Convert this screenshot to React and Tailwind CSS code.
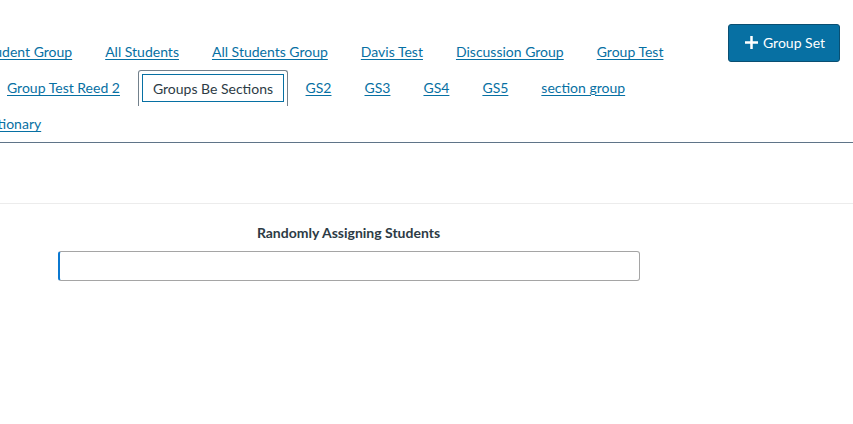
export default function App() {
  const link = "shrink-0 text-[14px] leading-[20px] text-[#0770a3] underline underline-offset-2 whitespace-nowrap";
  return (
    <div className="w-[853px] h-[424px] overflow-hidden bg-white font-['Lato','Noto_Sans',sans-serif] text-[14px]">
      <div className="h-[143px] border-b border-[#5f7488] flex items-start">
        <div className="w-[728px] shrink-0 pt-[34px]">
          <div className="flex flex-col">
            <div className="h-[36px] flex items-center gap-[33px] -ml-[18px]">
              <a className={link}>Student Group</a>
              <a className={link}>All Students</a>
              <a className={link}>All Students Group</a>
              <a className={link}>Davis Test</a>
              <a className={link}>Discussion Group</a>
              <a className={link}>Group Test</a>
            </div>
            <div className="h-[36px] flex items-center ml-[7px]">
              <a className={link}>Group Test Reed 2</a>
              <div className="ml-[18px] mr-[17.6px] h-[36px] w-[150px] shrink-0 rounded-t-[3px] border border-b-0 border-[#73818c] pt-[3px] px-[3px]">
                <div className="h-[28px] border border-[#0770a3] flex items-center justify-center text-[#2d3b45] whitespace-nowrap">Groups Be Sections</div>
              </div>
              <div className="flex gap-[33px]">
                <a className={link}>GS2</a>
                <a className={link}>GS3</a>
                <a className={link}>GS4</a>
                <a className={link}>GS5</a>
                <a className={link}>section group</a>
              </div>
            </div>
            <div className="h-[36px] flex items-center -ml-[23px]">
              <a className={link}>Dictionary</a>
            </div>
          </div>
        </div>
        <div className="pt-[24px]">
          <button className="w-[112px] h-[38px] pl-[2px] pb-[1px] rounded-[3px] border border-[#0a4f72] bg-[#0770a3] text-white flex items-center justify-center gap-[5px]">
            <svg width="13" height="13" viewBox="0 0 13 13" aria-hidden="true">
              <path d="M6.5 0v13M0 6.5h13" stroke="#ffffff" strokeWidth="2.5" fill="none" />
            </svg>
            <span>Group Set</span>
          </button>
        </div>
      </div>
      <div className="h-[61px] border-b border-[#ececec]"></div>
      <div className="w-[581px] ml-[58px] pt-[19px]">
        <div className="h-[19px] leading-[19px] text-center font-bold text-[#2d3b45]">Randomly Assigning Students</div>
        <div className="w-[582px] h-[30px] mt-[9px] rounded-[3px] border border-[#a5a5a5] border-l-2 border-l-[#0b78d0] bg-white"></div>
      </div>
    </div>
  );
}
